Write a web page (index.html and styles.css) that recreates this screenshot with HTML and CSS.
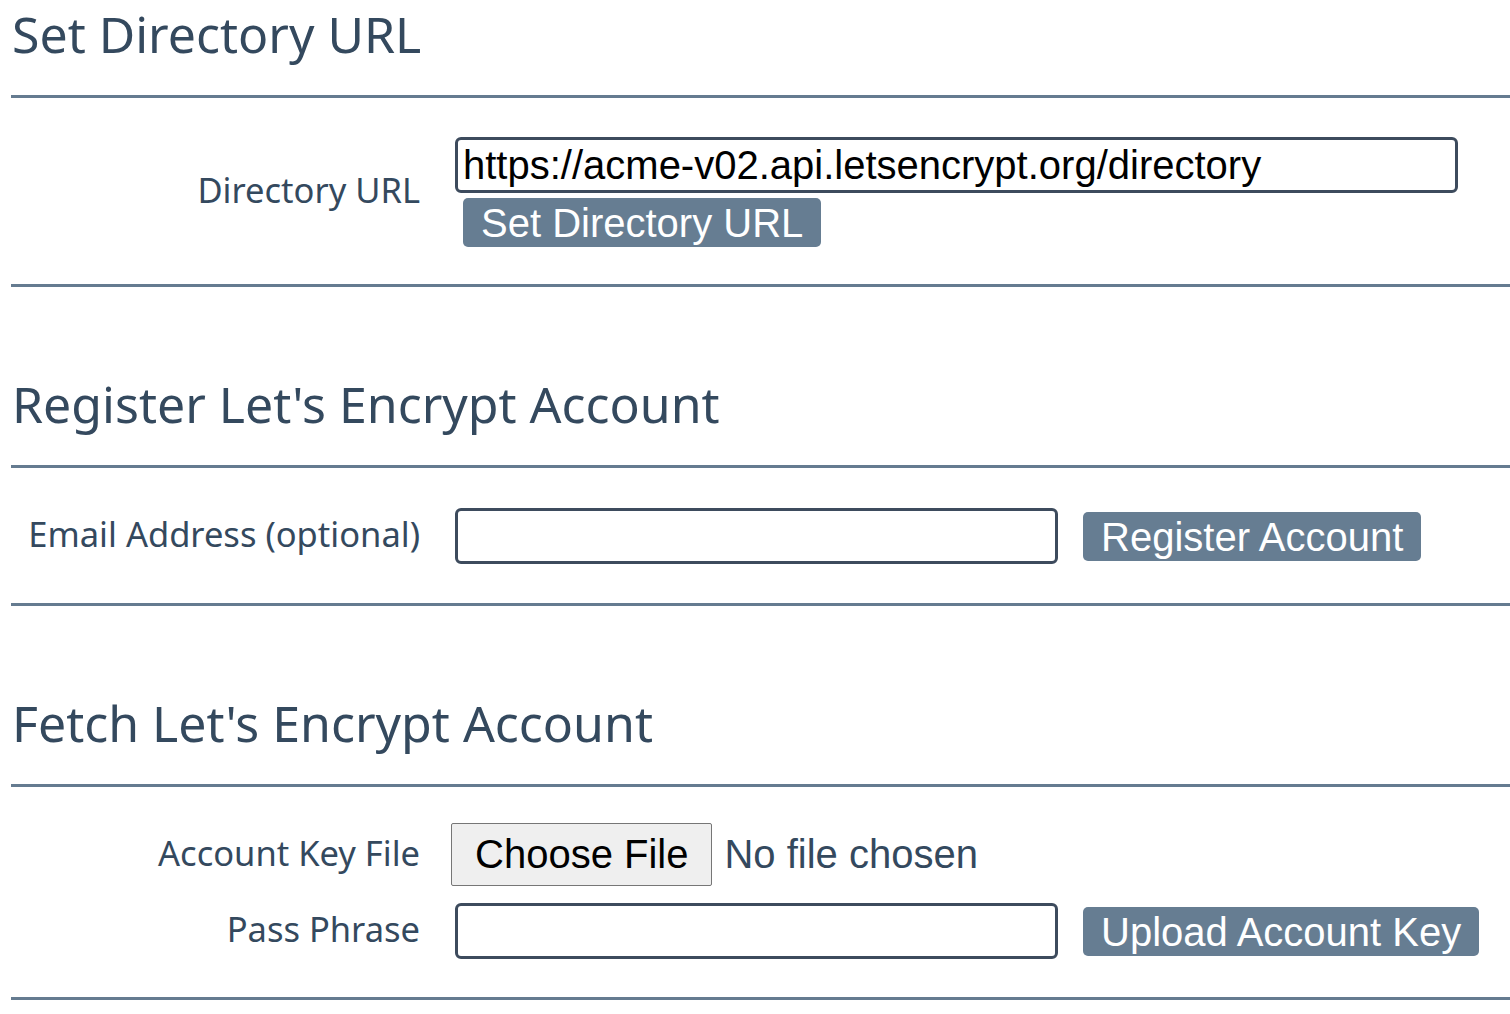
FILE: index.html
```html
<!DOCTYPE html>
<html lang="en">
<head>
<meta charset="utf-8">
<title>ACME Account</title>
<link rel="stylesheet" href="styles.css">
</head>
<body>
<div class="page">
  <h2 class="section-title">Set Directory URL</h2>
  <hr class="rule">
  <form class="form form-dir">
    <label class="field-label" for="dir-url">Directory URL</label>
    <div class="field field-stack">
      <input class="text-input input-wide" id="dir-url" type="text" value="https://acme-v02.api.letsencrypt.org/directory">
      <button class="btn btn-under" type="button">Set Directory URL</button>
    </div>
  </form>
  <hr class="rule">

  <h2 class="section-title title-spaced">Register Let's Encrypt Account</h2>
  <hr class="rule">
  <form class="form form-reg">
    <label class="field-label" for="email">Email Address (optional)</label>
    <div class="field field-row">
      <input class="text-input input-mid" id="email" type="text">
      <button class="btn btn-side" type="button">Register Account</button>
    </div>
  </form>
  <hr class="rule">

  <h2 class="section-title title-spaced">Fetch Let's Encrypt Account</h2>
  <hr class="rule">
  <form class="form form-fetch">
    <label class="field-label" for="keyfile">Account Key File</label>
    <div class="field field-row">
      <input class="file-input" id="keyfile" type="file">
    </div>
    <label class="field-label" for="pass">Pass Phrase</label>
    <div class="field field-row">
      <input class="text-input input-mid" id="pass" type="text">
      <button class="btn btn-side" type="button">Upload Account Key</button>
    </div>
  </form>
  <hr class="rule">
</div>
</body>
</html>
```

FILE: styles.css
```css
html, body {
  margin: 0;
  padding: 0;
  background: #ffffff;
}

.page {
  padding: 3px 0 0 11px;
  font-family: "Noto Sans", "Open Sans", sans-serif;
  color: #34495e;
}

.section-title {
  margin: 0 0 30px 1px;
  font-size: 50px;
  line-height: 62px;
  font-weight: 400;
  color: #34495e;
}

.title-spaced {
  margin-top: 86px;
}

.rule {
  margin: 0;
  height: 0;
  border: none;
  border-top: 3px solid #657b90;
}

.form {
  display: grid;
  grid-template-columns: 409px 1fr;
  column-gap: 31px;
  row-gap: 17px;
  align-items: center;
}

.form-dir { padding: 39px 0 37px; }
.form-reg { padding: 40px 0 39px; }
.form-fetch { padding: 36px 0 38px; }

.field-label {
  text-align: right;
  font-size: 34.5px;
  line-height: 46px;
  padding-bottom: 4px;
  color: #34495e;
}

.field-stack {
  display: flex;
  flex-direction: column;
  align-items: flex-start;
}

.field-row {
  display: flex;
  align-items: center;
}

.text-input {
  box-sizing: border-box;
  height: 56px;
  margin: 0 0 0 4px;
  padding: 0 5px;
  border: 3px solid #3d4b5d;
  border-radius: 6px;
  font-family: "Liberation Sans", Arial, sans-serif;
  font-size: 40px;
  color: #000000;
  background: #ffffff;
  outline: none;
}

.input-wide { width: 1003px; }
.input-mid { width: 603px; }

.btn {
  padding: 2px 18px 1px;
  border: none;
  border-radius: 5px;
  background: #667d92;
  color: #ffffff;
  font-family: "Liberation Sans", Arial, sans-serif;
  font-size: 40px;
  line-height: 46px;
  cursor: pointer;
}

.btn-under {
  margin: 5px 0 0 12px;
}

.btn-side {
  margin-left: 25px;
}

.file-input {
  font-family: "Liberation Sans", Arial, sans-serif;
  font-size: 40px;
  color: #34495e;
}

.file-input::file-selector-button {
  font: inherit;
  line-height: 46px;
  color: #000000;
  background: #efefef;
  border: 1px solid #767676;
  border-radius: 2px;
  padding: 7px 23px 8px;
  margin: 0 12px 0 0;
}
```
